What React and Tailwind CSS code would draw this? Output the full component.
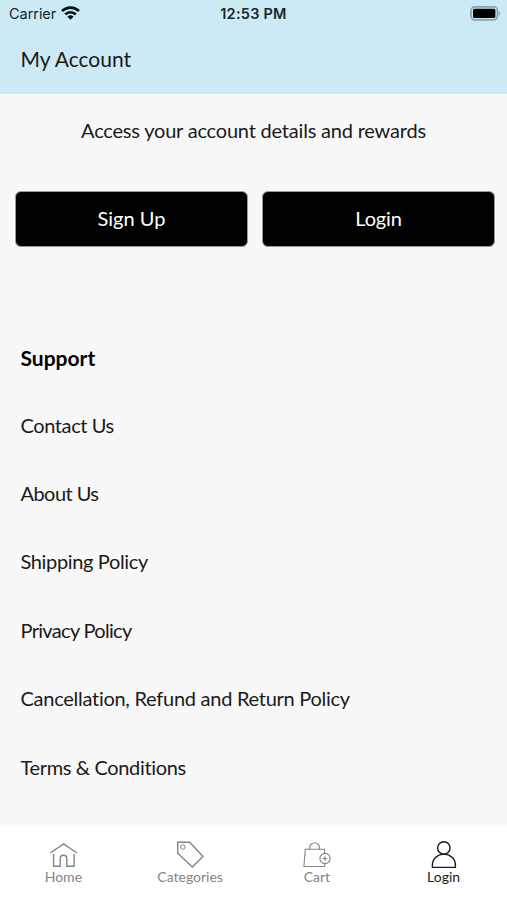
const SUPPORT_LINKS = [
  { label: 'Contact Us', tracking: 'tracking-[-0.400px]' },
  { label: 'About Us', tracking: 'tracking-[-0.550px]' },
  { label: 'Shipping Policy', tracking: 'tracking-[-0.360px]' },
  { label: 'Privacy Policy', tracking: 'tracking-[-0.680px]' },
  { label: 'Cancellation, Refund and Return Policy', tracking: 'tracking-[-0.270px]' },
  { label: 'Terms & Conditions', tracking: 'tracking-[-0.350px]' },
];

function HomeIcon() {
  return (
    <svg width="28" height="28" viewBox="0 0 28 28" fill="none" stroke="currentColor" strokeWidth="1.4">
      <path d="M1.300 13 14.600 3.800 28 13" />
      <path d="M4.600 14v12.200h6.600v-7.700a3.300 3.300 0 0 1 6.600 0v7.700h7.300V14" />
    </svg>
  );
}

function TagIcon() {
  return (
    <svg width="28" height="28" viewBox="0 0 28 28" fill="none" stroke="currentColor" strokeWidth="1.4">
      <path d="M1.700 2.200h12l13.200 14.200-10.500 10.600L1.700 13.200z" />
      <circle cx="6.800" cy="7" r="2.300" strokeWidth="1" />
    </svg>
  );
}

function BagIcon() {
  return (
    <svg width="28" height="28" viewBox="0 0 28 28" fill="none" stroke="currentColor" strokeWidth="1.1">
      <path d="M21.500 13.500V9.300H2.300L.9 26.500h20.800v-3.200" />
      <path d="M6.700 9.300V7.700a4.900 4.900 0 0 1 9.800 0v1.600" />
      <circle cx="22" cy="18.500" r="5.100" />
      <path d="M19.700 18.500h4.600M22 16.200v4.600" />
    </svg>
  );
}

function UserIcon() {
  return (
    <svg width="28" height="28" viewBox="0 0 28 28" fill="none" stroke="currentColor" strokeWidth="1.4">
      <circle cx="13.800" cy="7.900" r="6.200" />
      <path d="M2.400 27.500v-2.300a11.500 11.100 0 0 1 23 0v2.300z" />
    </svg>
  );
}

const TABS = [
  { label: 'Home', icon: HomeIcon },
  { label: 'Categories', icon: TagIcon },
  { label: 'Cart', icon: BagIcon },
  { label: 'Login', icon: UserIcon, active: true },
];

function StatusBar() {
  return (
    <div className="grid h-7 grid-cols-3 items-center pl-[9px] pr-[6px] font-['Inter','Liberation_Sans',sans-serif] text-[14.5px] text-[#17252b]">
      <div className="flex items-center gap-[5px]">
        <span className="tracking-[-0.050px]">Carrier</span>
        <svg width="19" height="15" viewBox="0 0 19 15" fill="none" stroke="#071014" strokeWidth="2.700">
          <path d="M1 5a12.200 12.200 0 0 1 17 0M4.200 8.400a7.600 7.600 0 0 1 10.600 0" />
          <path d="M9.500 13.800 6.400 10.700a4.500 4.500 0 0 1 6.200 0z" fill="#071014" stroke="none" />
        </svg>
      </div>
      <span className="-ml-[3px] text-center font-semibold tracking-[0.250px]">12:53 PM</span>
      <svg className="mb-[2px] justify-self-end" width="31" height="15" viewBox="0 0 31 15" fill="none">
        <rect x="1" y=".9" width="26.400" height="13" rx="3.800" stroke="#8ba4ae" strokeWidth="1.700" />
        <rect x="3" y="2.800" width="22.400" height="9.200" rx="1.500" fill="#000" />
        <path d="M28.500 5v4.800c2-.8 2-4 0-4.800z" fill="#8ba4ae" />
      </svg>
    </div>
  );
}

export default function App() {
  return (
    <div className="flex h-[900px] w-[507px] flex-col overflow-hidden bg-[#f8f8f8] font-['Lato','Liberation_Sans',sans-serif] text-xl text-[#1a1a1a]">
      <header className="h-[94px] shrink-0 bg-[#cceaf5]">
        <StatusBar />
        <h1 className="px-[20.500px] pt-4 text-[21px] leading-[30px]">My Account</h1>
      </header>

      <main className="flex-1">
        <p className="pt-[21px] text-center leading-[30px] tracking-[-0.200px]">Access your account details and rewards</p>
        <div className="mt-[46px] grid grid-cols-2 gap-[14px] pl-[15px] pr-3">
          <button className="h-[56px] rounded-md border border-[#999] bg-black pb-[3px] text-white">Sign Up</button>
          <button className="h-[56px] rounded-md border border-[#999] bg-black pb-[3px] tracking-[-0.150px] text-white">Login</button>
        </div>

        <h2 className="mt-[95px] px-[20.500px] text-[21px] leading-[32px] font-bold text-black">Support</h2>
        <ul className="mt-[16.500px]">
          {SUPPORT_LINKS.map((link) => (
            <li key={link.label} className="flex h-[68.400px] items-center px-[20.500px]">
              <a className={link.tracking}>{link.label}</a>
            </li>
          ))}
        </ul>
      </main>

      <nav className="grid h-[74px] shrink-0 grid-cols-4 bg-white">
        {TABS.map(({ label, icon: Icon, active }) => (
          <div
            key={label}
            className={`flex flex-col items-center pt-[14px] text-[14px] leading-[18px] ${active ? 'text-[#1a1a1a]' : 'text-[#848484]'}`}
          >
            <Icon />
            <span>{label}</span>
          </div>
        ))}
      </nav>
    </div>
  );
}
